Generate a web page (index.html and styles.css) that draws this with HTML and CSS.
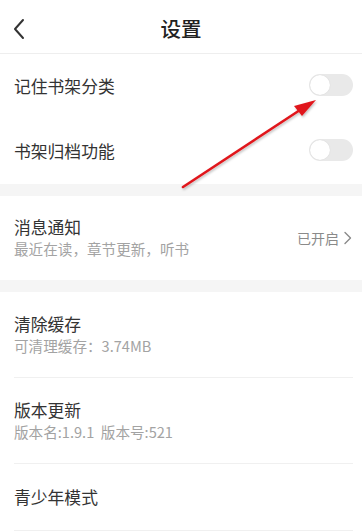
FILE: index.html
```html
<!DOCTYPE html>
<html lang="zh">
<head>
<meta charset="utf-8">
<link rel="stylesheet" href="styles.css">
</head>
<body>
<div class="page">
  <header class="topbar">
    <svg class="back" width="14" height="22" viewBox="0 0 14 22"><path d="M11 2 L3 11 L11 20" fill="none" stroke="#333" stroke-width="2" stroke-linecap="round" stroke-linejoin="round"/></svg>
    <h1 class="title">设置</h1>
  </header>

  <section class="group">
    <div class="row single">
      <span class="label">记住书架分类</span>
      <span class="toggle"><span class="knob"></span></span>
    </div>
    <div class="row single">
      <span class="label">书架归档功能</span>
      <span class="toggle"><span class="knob"></span></span>
    </div>
  </section>

  <div class="band"></div>

  <section class="group">
    <div class="row double">
      <div class="texts">
        <span class="label">消息通知</span>
        <span class="sub">最近在读，章节更新，听书</span>
      </div>
      <span class="status">已开启<svg class="chev" width="9" height="14" viewBox="0 0 9 14"><path d="M2 1.5 L7.5 7 L2 12.5" fill="none" stroke="#8a8a8a" stroke-width="1.4" stroke-linecap="round" stroke-linejoin="round"/></svg></span>
    </div>
  </section>

  <div class="band"></div>

  <section class="group">
    <div class="row double bordered">
      <div class="texts">
        <span class="label">清除缓存</span>
        <span class="sub">可清理缓存：3.74MB</span>
      </div>
    </div>
    <div class="row double bordered">
      <div class="texts">
        <span class="label">版本更新</span>
        <span class="sub">版本名:1.9.1&nbsp;&nbsp;版本号:521</span>
      </div>
    </div>
    <div class="row single bordered">
      <span class="label">青少年模式</span>
    </div>
  </section>

  <svg class="arrow" width="362" height="532" viewBox="0 0 362 532">
    <defs>
      <filter id="sh" x="-10%" y="-10%" width="130%" height="130%">
        <feDropShadow dx="1" dy="1.5" stdDeviation="1" flood-color="#000" flood-opacity="0.25"/>
      </filter>
    </defs>
    <g filter="url(#sh)">
      <line x1="183" y1="187" x2="300" y2="110" stroke="#e0191c" stroke-width="2.6" stroke-linecap="round"/>
      <polygon points="316,100 294,106 302,116" fill="#e0191c"/>
    </g>
  </svg>
</div>
</body>
</html>
```

FILE: styles.css
```css
* { box-sizing: border-box; margin: 0; padding: 0; }
html, body { background: #fff; }
body {
  font-family: "Noto Sans CJK SC", "Noto Sans", "Liberation Sans", sans-serif;
  color: #333;
  width: 362px;
  height: 532px;
  overflow: hidden;
}
.page { position: relative; width: 362px; height: 532px; }

.topbar {
  height: 54px;
  border-bottom: 1px solid #eeeeee;
  display: flex;
  align-items: center;
  justify-content: center;
  position: relative;
}
.back { position: absolute; left: 12px; top: 18px; }
.title {
  font-size: 20.5px;
  font-weight: 500;
  color: #222;
  line-height: 24px;
  margin-top: 3px;
}

.band { height: 12px; background: #f5f5f5; }

.row {
  display: flex;
  align-items: center;
  justify-content: space-between;
  margin-left: 14px;
  margin-right: 9px;
}
.row.single { height: 65px; }
.row.double { height: 84px; }
.row.bordered { border-bottom: 1px solid #f0f0f0; }
.row.double.bordered { height: 86px; }
.row.single.bordered { height: 67px; }

.label { font-size: 16.8px; line-height: 21px; color: #333; }
.texts { display: flex; flex-direction: column; }
.sub { font-size: 14.6px; line-height: 21px; color: #a3a3a3; }

.status {
  display: flex;
  align-items: center;
  gap: 4px;
  font-size: 14px;
  color: #8a8a8a;
  margin-right: 1px;
}

.toggle {
  width: 44px;
  height: 22px;
  border-radius: 11px;
  background: #e9e9e9;
  display: flex;
  align-items: center;
  padding-left: 1px;
  margin-top: -3px;
}
.knob {
  width: 20px;
  height: 20px;
  border-radius: 50%;
  background: #fff;
  box-shadow: 0 0 1px rgba(0,0,0,0.15);
}

.arrow { position: absolute; left: 0; top: 0; pointer-events: none; }
```
